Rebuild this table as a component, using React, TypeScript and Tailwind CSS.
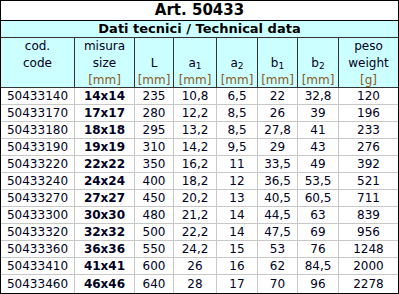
import React from 'react';

type Row = [string, string, string, string, string, string, string, string];

const rows: Row[] = [
  ['50433140', '14x14', '235', '10,8', '6,5', '22', '32,8', '120'],
  ['50433170', '17x17', '280', '12,2', '8,5', '26', '39', '196'],
  ['50433180', '18x18', '295', '13,2', '8,5', '27,8', '41', '233'],
  ['50433190', '19x19', '310', '14,2', '9,5', '29', '43', '276'],
  ['50433220', '22x22', '350', '16,2', '11', '33,5', '49', '392'],
  ['50433240', '24x24', '400', '18,2', '12', '36,5', '53,5', '521'],
  ['50433270', '27x27', '450', '20,2', '13', '40,5', '60,5', '711'],
  ['50433300', '30x30', '480', '21,2', '14', '44,5', '63', '839'],
  ['50433320', '32x32', '500', '22,2', '14', '47,5', '69', '956'],
  ['50433360', '36x36', '550', '24,2', '15', '53', '76', '1248'],
  ['50433410', '41x41', '600', '26', '16', '62', '84,5', '2000'],
  ['50433460', '46x46', '640', '28', '17', '70', '96', '2278'],
];

const cols = 'grid grid-cols-[74px_60px_39px_43px_41px_40px_41px_59px]';

const Mm = ({ t = '[mm]' }: { t?: string }) => <span className="text-[#8a5a1e]">{t}</span>;

const Sub = ({ l, n }: { l: string; n: string }) => (
  <span>
    {l}
    <sub className="text-[9px] relative top-[2px]">{n}</sub>
  </span>
);

const header: React.ReactNode[][] = [
  ['cod.', 'code', ''],
  ['misura', 'size', <Mm key="m" />],
  ['', 'L', <Mm key="m" />],
  ['', <Sub key="s" l="a" n="1" />, <Mm key="m" />],
  ['', <Sub key="s" l="a" n="2" />, <Mm key="m" />],
  ['', <Sub key="s" l="b" n="1" />, <Mm key="m" />],
  ['', <Sub key="s" l="b" n="2" />, <Mm key="m" />],
  ['peso', 'weight', <Mm key="m" t="[g]" />],
];

export default function App() {
  return (
    <div className="w-[399px] h-[294px] bg-white font-['DejaVu_Sans',sans-serif] text-[12px] text-[#000022]">
      <div className="border border-black">
        <div className="h-[20px] border-b border-black flex items-center justify-center text-[15px] font-bold text-black">
          Art. 50433
        </div>
        <div className="h-[17px] border-b border-[#333] bg-[#ccffff] flex items-center justify-center text-[13px] font-bold text-black">
          Dati tecnici / Technical data
        </div>
        <div className={`${cols} h-[50px] bg-[#ccffff] border-b border-[#333]`}>
          {header.map((lines, i) => (
            <div
              key={i}
              className={`flex flex-col items-center justify-center leading-[17px] ${i < 7 ? 'border-r border-[#333]' : ''}`}
            >
              {lines.map((l, j) => (
                <div key={j} className="h-[17px]">
                  {l}
                </div>
              ))}
            </div>
          ))}
        </div>
        {rows.map((r, ri) => (
          <div
            key={r[0]}
            className={`${cols} ${ri < rows.length - 1 ? 'h-[17px] border-b border-[#c8c8c8]' : 'h-[18px]'}`}
          >
            {r.map((v, ci) => (
              <div
                key={ci}
                className={`flex items-center justify-center leading-none ${ci === 1 ? 'font-bold' : ''} ${ci < 7 ? 'border-r border-[#c8c8c8]' : ''}`}
              >
                {v}
              </div>
            ))}
          </div>
        ))}
      </div>
    </div>
  );
}
